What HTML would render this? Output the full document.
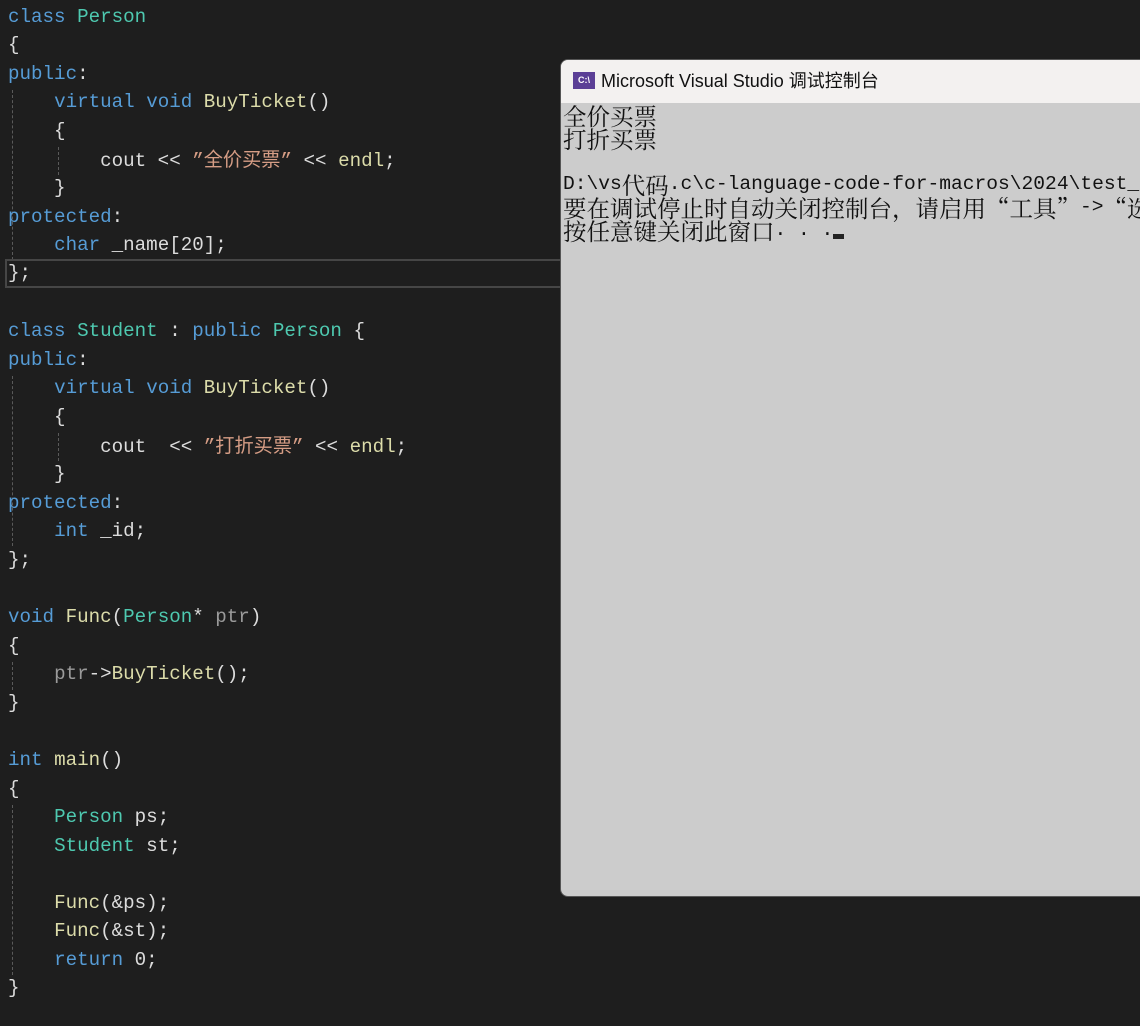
<!DOCTYPE html>
<html><head><meta charset="utf-8"><style>
body{margin:0;width:1140px;height:1026px;background:#1e1e1e;overflow:hidden;position:relative}
.l{position:absolute;left:8px;height:28px;line-height:28px;white-space:pre;font:19.2px "Liberation Mono","Noto Sans CJK SC",monospace;color:#dcdcdc}
.k{color:#569cd6}.t{color:#4ec9b0}.f{color:#dcdcaa}.s{color:#d69d85}.p{color:#9a9a9a}.b{color:#dcdcdc}
.g{position:absolute;width:0;border-left:1px dashed #5a5a5a}
#win{position:absolute;left:560px;top:59px;width:600px;height:836px;border:1px solid #555;border-radius:8px;overflow:hidden;background:#cccccc}
#tb{height:43px;background:#f3f1f0;font:18px "Liberation Sans","Noto Sans CJK SC",sans-serif;color:#111;line-height:43px;padding-left:40px;position:relative}
#ic{position:absolute;left:12px;top:12px;width:22px;height:17px;background:#5b3f96;color:#fff;font:bold 9px "Liberation Sans",sans-serif;line-height:17px;text-align:center}
#con{padding:1px 0 0 2px;font:19.6px "Liberation Mono","Noto Serif CJK SC",monospace;color:#111;white-space:pre}
#con div{height:23px;line-height:23px}
.c{font:23.5px "Noto Serif CJK SC",serif;display:inline-block;height:23px;line-height:23px;vertical-align:top}
.m{display:inline-block;vertical-align:top}
</style></head><body>
<div class="g" style="left:12px;top:90px;height:170px"></div>
<div class="g" style="left:58px;top:147px;height:28px"></div>
<div class="g" style="left:12px;top:376px;height:170px"></div>
<div class="g" style="left:58px;top:433px;height:28px"></div>
<div class="g" style="left:12px;top:662px;height:28px"></div>
<div class="g" style="left:12px;top:805px;height:170px"></div>
<div style="position:absolute;left:5px;top:259px;width:1200px;height:25px;border:2px solid #464646"></div>
<div class="l" style="top:6px"><span class="k">class</span> <span class="t">Person</span></div>
<div class="l" style="top:34px">{</div>
<div class="l" style="top:63px"><span class="k">public</span>:</div>
<div class="l" style="top:91px">    <span class="k">virtual</span> <span class="k">void</span> <span class="f">BuyTicket</span>()</div>
<div class="l" style="top:120px">    {</div>
<div class="l" style="top:144px">        cout &lt;&lt; <span class="s">”全价买票”</span> &lt;&lt; <span class="f">endl</span>;</div>
<div class="l" style="top:177px">    }</div>
<div class="l" style="top:206px"><span class="k">protected</span>:</div>
<div class="l" style="top:234px">    <span class="k">char</span> _name[20];</div>
<div class="l" style="top:262px">};</div>
<div class="l" style="top:320px"><span class="k">class</span> <span class="t">Student</span> : <span class="k">public</span> <span class="t">Person</span> {</div>
<div class="l" style="top:349px"><span class="k">public</span>:</div>
<div class="l" style="top:377px">    <span class="k">virtual</span> <span class="k">void</span> <span class="f">BuyTicket</span>()</div>
<div class="l" style="top:406px">    {</div>
<div class="l" style="top:430px">        cout  &lt;&lt; <span class="s">”打折买票”</span> &lt;&lt; <span class="f">endl</span>;</div>
<div class="l" style="top:463px">    }</div>
<div class="l" style="top:492px"><span class="k">protected</span>:</div>
<div class="l" style="top:520px">    <span class="k">int</span> _id;</div>
<div class="l" style="top:549px">};</div>
<div class="l" style="top:606px"><span class="k">void</span> <span class="f">Func</span>(<span class="t">Person</span>* <span class="p">ptr</span>)</div>
<div class="l" style="top:635px">{</div>
<div class="l" style="top:663px">    <span class="p">ptr</span>-&gt;<span class="f">BuyTicket</span>();</div>
<div class="l" style="top:692px">}</div>
<div class="l" style="top:749px"><span class="k">int</span> <span class="f">main</span>()</div>
<div class="l" style="top:778px">{</div>
<div class="l" style="top:806px">    <span class="t">Person</span> ps;</div>
<div class="l" style="top:835px">    <span class="t">Student</span> st;</div>
<div class="l" style="top:892px">    <span class="f">Func</span>(&amp;ps);</div>
<div class="l" style="top:920px">    <span class="f">Func</span>(&amp;st);</div>
<div class="l" style="top:949px">    <span class="k">return</span> 0;</div>
<div class="l" style="top:977px">}</div>
<div id="win"><div id="tb"><div id="ic">C:\</div>Microsoft Visual Studio 调试控制台</div>
<div id="con"><div><span class="c">全价买票</span></div><div><span class="c">打折买票</span></div><div></div><div><span class="m">D:\vs</span><span class="c">代码</span><span class="m">.c\c-language-code-for-macros\2024\test_1\x64\Debug</span></div><div><span class="c">要在调试停止时自动关闭控制台，请启用“工具”</span><span class="m">-&gt;</span><span class="c">“选项”</span></div><div><span class="c">按任意键关闭此窗口</span><span class="m">. . .</span><span style="display:inline-block;width:11px;height:5px;background:#222;margin-top:15px;vertical-align:top"></span></div></div></div>
</body></html>
